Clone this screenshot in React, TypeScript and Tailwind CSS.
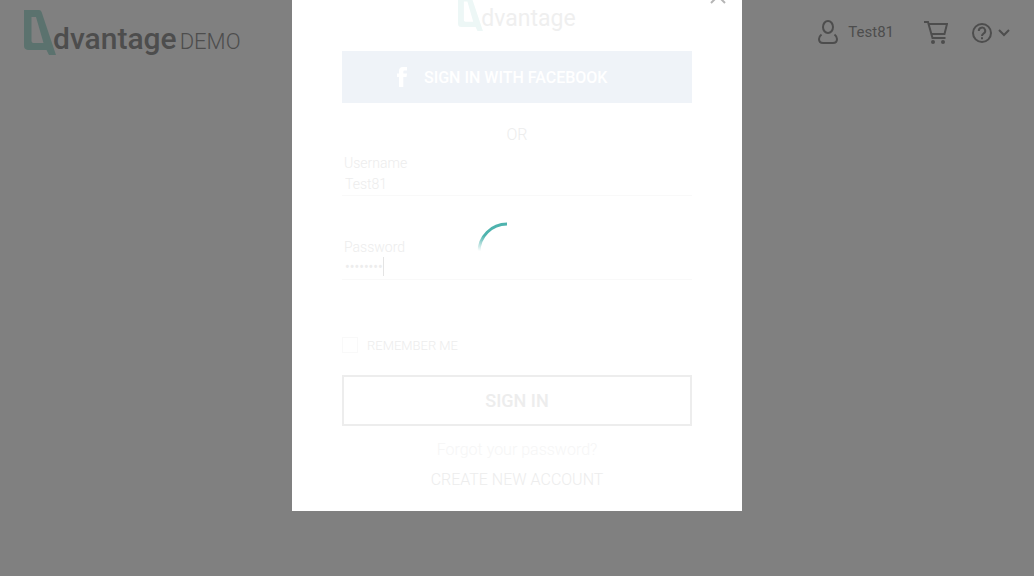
import React, { useState } from 'react';

function Mark({ className }: { className: string }) {
  return (
    <svg viewBox="0 0 32 45" className={className} aria-hidden="true">
      <path
        fillRule="evenodd"
        fill="currentColor"
        d="M0 0H15Q17 0 17.600 2L32 45H25L22.500 40H4Q0 39.500 0 36ZM7.500 7V31Q7.500 33 9.500 33H19.500L12 7Z"
      />
    </svg>
  );
}

function Header() {
  return (
    <header className="flex h-16 items-start justify-between pr-6 pl-6 text-[#4d4d4d]">
      <a href="#home" aria-label="Advantage DEMO" className="flex pt-[10px]">
        <Mark className="h-[45px] w-8 text-[#5b726e]" />
        <span className="-ml-[3px] pt-[11px] text-[30px] leading-9 font-medium">dvantage</span>
        <span className="pt-[14px] pl-[3px] text-[22px] leading-9 font-light">DEMO</span>
      </a>
      <nav className="flex h-16 items-center">
        <a href="#account" className="flex items-center gap-[10px]">
          <svg viewBox="0 0 20 24" className="h-6 w-5" fill="none" stroke="currentColor" strokeWidth="2" aria-hidden="true">
            <ellipse cx="10" cy="7" rx="5" ry="6" />
            <path d="M3.500 14.500Q1 16.500 1 19Q1 23 5 23H15Q19 23 19 19Q19 16.500 16.500 14.500" />
          </svg>
          <span className="text-[15px] leading-5">Test81</span>
        </a>
        <a href="#cart" aria-label="Cart" className="ml-[30px]">
          <svg viewBox="0 0 24 24" className="size-6" fill="none" stroke="currentColor" strokeWidth="2" aria-hidden="true">
            <path d="M0 2H4L8.500 18H21.500M5 4H23L20.500 14H7.500" />
            <circle cx="9" cy="22" r="2" fill="currentColor" stroke="none" />
            <circle cx="19" cy="22" r="2" fill="currentColor" stroke="none" />
          </svg>
        </a>
        <button type="button" aria-label="Help" className="ml-6 flex items-center gap-[6px] pt-px">
          <svg viewBox="0 0 20 20" className="size-5" fill="none" stroke="currentColor" strokeWidth="2" aria-hidden="true">
            <circle cx="10" cy="10" r="9" />
            <path d="M6.800 8A3.200 3.200 0 1 1 11.500 10.600Q10 11.500 10 13" />
            <path d="M10 14.200V16.200" />
          </svg>
          <svg viewBox="0 0 12 8" className="h-2 w-3" fill="none" stroke="currentColor" strokeWidth="2" aria-hidden="true">
            <path d="M1 1L6 6L11 1" />
          </svg>
        </button>
      </nav>
    </header>
  );
}

function Spinner() {
  return (
    <svg viewBox="0 0 60 60" className="absolute top-[254px] left-[185px] size-[60px]" fill="none" role="status" aria-label="Loading">
      <defs>
        <linearGradient id="fade" gradientUnits="userSpaceOnUse" x1="10" y1="3" x2="2" y2="29">
          <stop offset="0.4" stopColor="#4eb3ae" />
          <stop offset="1" stopColor="#4eb3ae" stopOpacity="0" />
        </linearGradient>
      </defs>
      <path d="M2 30A28 28 0 0 1 30 2" stroke="url(#fade)" strokeWidth="3" />
    </svg>
  );
}

export default function App() {
  const [user, setUser] = useState('Test81');
  const [password, setPassword] = useState('password');
  return (
    <div className="min-h-screen bg-[#808080] font-['Roboto',sans-serif]">
      <Header />
      <div className="fixed inset-0 flex items-start justify-center overflow-hidden">
        <form
          role="dialog"
          aria-label="Sign in"
          onSubmit={(e) => e.preventDefault()}
          className="relative -mt-8 flex w-[450px] flex-col bg-white px-[50px] pt-7 pb-[19px] text-[#ededed]"
        >
          <button type="button" aria-label="Close" className="absolute top-[20px] right-4 text-[#b5b5b5]">
            <svg viewBox="0 0 16 16" className="size-4" fill="none" stroke="currentColor" strokeWidth="2" aria-hidden="true">
              <path d="M1 1L15 15M15 1L1 15" />
            </svg>
          </button>
          <div className="flex h-[35px] justify-center">
            <Mark className="h-[35px] w-[25px] text-[#edf7f6]" />
            <span className="-ml-[2px] pt-[9px] text-[23px] leading-7 text-[#efefef]">dvantage</span>
          </div>
          <button type="button" className="mt-5 flex h-[52px] items-center bg-[#eff3f8] pl-[55px] text-base font-medium text-white">
            <svg viewBox="0 0 10 20" className="h-5 w-[10px]" fill="currentColor" aria-hidden="true">
              <path d="M2 20V10H0V6.500H2V4Q2 0 6 0H10V3.500H7.500Q6.300 3.500 6.300 4.700V6.500H10L9.500 10H6.300V20Z" />
            </svg>
            <span className="pt-[2px] pl-[17px]">SIGN IN WITH FACEBOOK</span>
          </button>
          <p className="mt-5 text-center text-base leading-6 font-light">OR</p>
          <label htmlFor="user" className="mt-[6px] pl-[2px] text-sm leading-5 font-light">Username</label>
          <input
            id="user"
            value={user}
            onChange={(e) => setUser(e.target.value)}
            className="h-[23px] w-full border-b border-[#f9f9f9] bg-transparent pr-0 pl-[3px] text-sm leading-4 font-light outline-none"
          />
          <label htmlFor="password" className="mt-[41px] pl-[2px] text-sm leading-5 font-light">Password</label>
          <div className="flex h-[23px] items-start border-b border-[#f9f9f9] pl-[3px]">
            <input
              id="password"
              type="password"
              value={password}
              onChange={(e) => setPassword(e.target.value)}
              className="h-[19px] w-[38px] bg-transparent text-sm leading-4 outline-none"
            />
            <span className="h-[19px] w-px bg-[#e4e4e4]" />
          </div>
          <div className="mt-14 flex items-center gap-[9px]">
            <input id="remember" type="checkbox" className="size-4 appearance-none border border-[#f9f9f9]" />
            <label htmlFor="remember" className="pt-[2px] text-[13px] leading-4 font-light">REMEMBER ME</label>
          </div>
          <button type="submit" className="mt-[21px] h-[51px] border-2 border-[#ededed] text-lg font-medium">SIGN IN</button>
          <a href="#forgot" className="mt-3 text-center text-base leading-6 font-light text-[#f6f6f6]">Forgot your password?</a>
          <a href="#register" className="mt-[6px] text-center text-base leading-6 font-light">CREATE NEW ACCOUNT</a>
          <Spinner />
        </form>
      </div>
    </div>
  );
}
